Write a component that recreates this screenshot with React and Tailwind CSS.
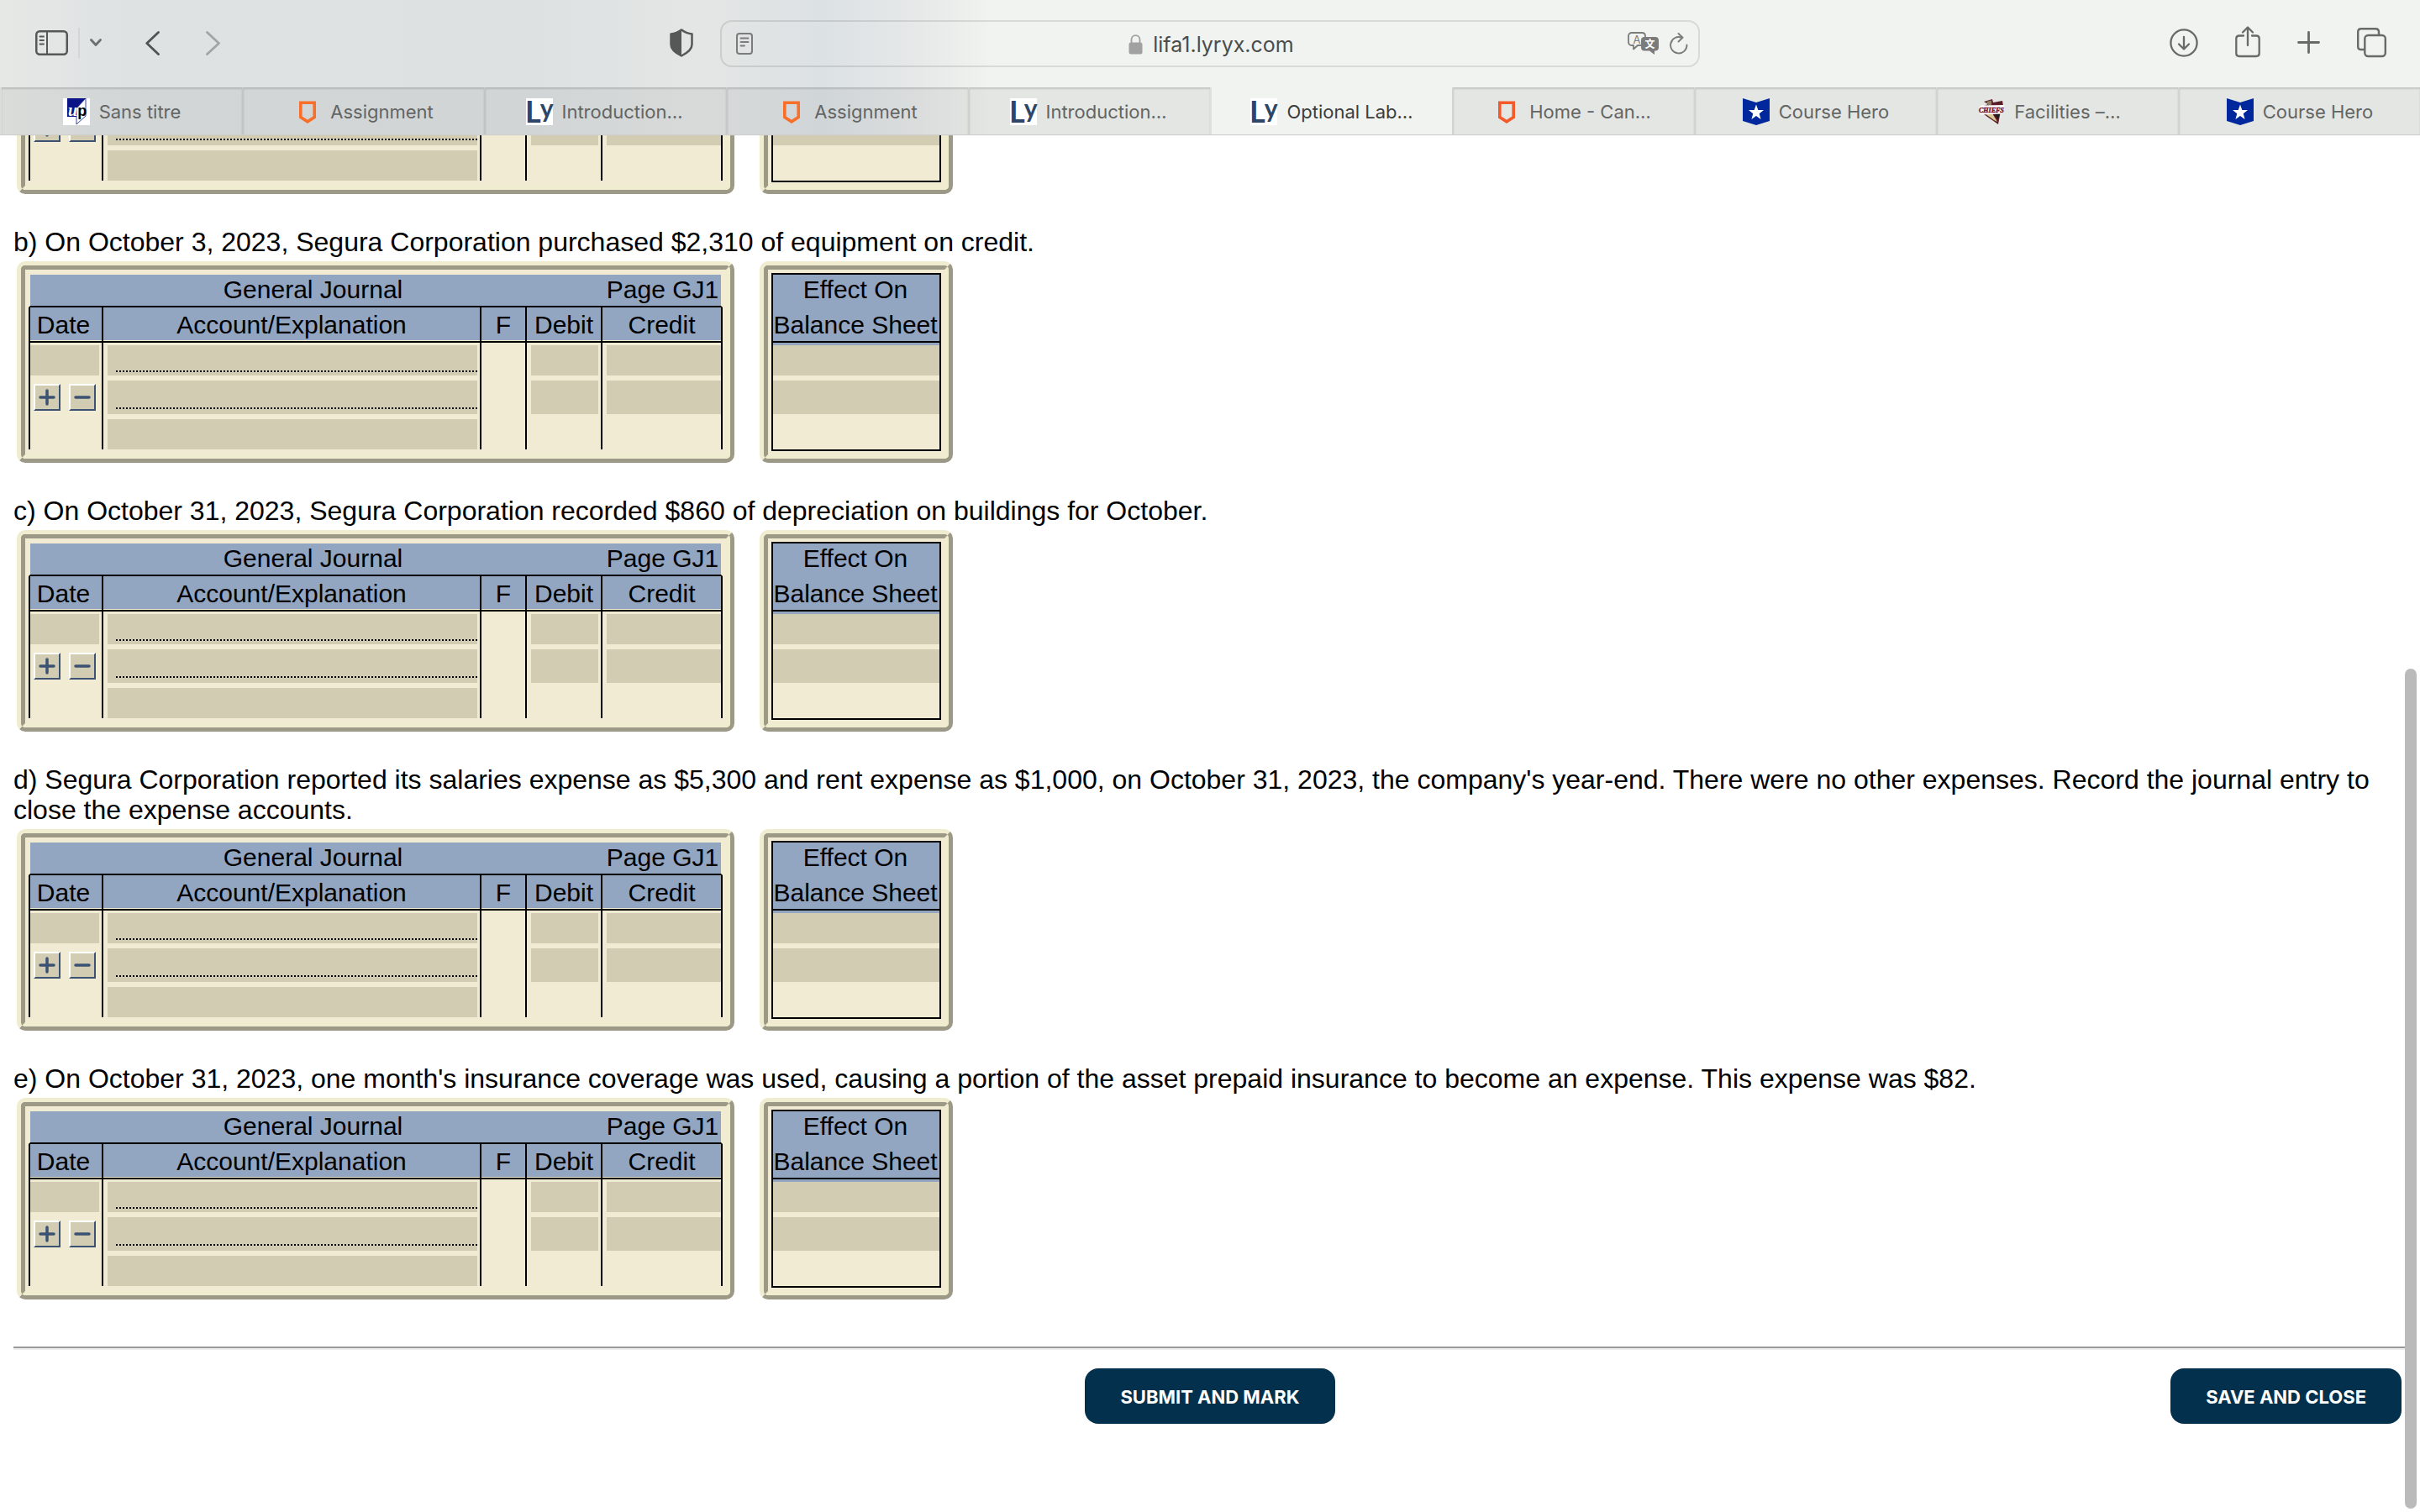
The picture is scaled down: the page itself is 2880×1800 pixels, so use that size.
import React from 'react';

/* ---------- Favicons ---------- */

function UpIcon() {
  return (
    <svg width="32" height="32" viewBox="0 0 32 32" className="overflow-visible" aria-hidden="true">
      <rect width="32" height="32" fill="#fff" />
      <path d="M5 0H27L16 12V22H5Z" fill="#0a1487" />
      <path d="M27 0V21L16 31V12Z" fill="#fff" stroke="#0a1487" strokeWidth="0.8" />
      <text x="6" y="21" fontWeight="700" fill="#fff">
        <tspan fontFamily="Liberation Serif, serif" fontStyle="italic" fontSize="20">u</tspan>
        <tspan fontFamily="Liberation Sans, sans-serif" fontSize="18" fill="#000">p</tspan>
      </text>
    </svg>
  );
}

function ShieldIcon({ color = '#f76f28' }) {
  return (
    <svg width="32" height="32" viewBox="0 0 32 32" aria-hidden="true">
      <path d="M7.8 5.2H24.2V22.5L16 27.8L7.8 22.5Z" fill="none" stroke={color} strokeWidth="3.6" />
    </svg>
  );
}

function LyIcon() {
  return (
    <svg width="32" height="32" viewBox="0 0 32 32" className="overflow-visible" aria-hidden="true">
      <rect width="32" height="32" fill="#fff" />
      <text x="-1" y="29" fontFamily="Lato, sans-serif" fontWeight="700" fontSize="36" fill="#2d4668">
        L<tspan fontSize="30" dx="-1" dy="-6">y</tspan>
      </text>
    </svg>
  );
}

function HeroIcon() {
  return (
    <svg width="32" height="32" viewBox="0 0 32 32" aria-hidden="true">
      <path d="M0 0L16 5L32 0V27L16 32L0 27Z" fill="#00279b" />
      <path d="M16 7.5L18.3 14H25L19.7 18.2L21.6 25L16 21L10.4 25L12.3 18.2L7 14H13.7Z" fill="#fff" />
    </svg>
  );
}

function ChiefsIcon() {
  return (
    <svg width="32" height="32" viewBox="0 0 32 32" className="overflow-visible" aria-hidden="true">
      <path d="M7 4L17 1L18 5L29 3L30 9L26 20L24 31L4 17L5 10L12 7Z" fill="#5c1d2a" />
      <path d="M10 4L16 2.5L16 8L13 9Z" fill="#8d8464" />
      <path d="M8 18L17 18L23 28L19 26Z" fill="#d8cc93" />
      <path d="M19 19L26 19L24 25Z" fill="#211a1c" />
      <path d="M1 11L4 8.5L31 8L29 18.5L3 19.5Z" fill="#fff" />
      <text x="1" y="17" fontFamily="Liberation Serif, serif" fontStyle="italic" fontWeight="700" fontSize="8" stroke="#7b1830" strokeWidth="0.5" fill="#7b1830">CHIEFS</text>
    </svg>
  );
}

/* ---------- Toolbar icons ---------- */

function SidebarIcon() {
  return (
    <svg width="39" height="30" viewBox="0 0 39 30" fill="none" stroke="#555857" strokeLinecap="round" aria-hidden="true">
      <rect x="1.25" y="1.25" width="36.5" height="27.5" rx="4" strokeWidth="2.5" />
      <path d="M14 1V29" strokeWidth="2" />
      <path d="M5.5 7.5H10M5.5 12H10M5.5 16.5H10" strokeWidth="1.8" />
    </svg>
  );
}

function PrivacyIcon() {
  return (
    <svg width="28" height="34" viewBox="0 0 28 34" fill="none" aria-hidden="true">
      <path d="M14 1.5C18 4.5 22 6 26.5 6.5V19C26.5 25 20 29.5 14 32.5C8 29.5 1.5 25 1.5 19V6.5C6 6 10 4.5 14 1.5Z" stroke="#555857" strokeWidth="2.5" strokeLinejoin="round" />
      <path d="M14 1.5V32.5C8 29.5 1.5 25 1.5 19V6.5C6 6 10 4.5 14 1.5Z" fill="#555857" />
    </svg>
  );
}

function ReaderIcon() {
  return (
    <svg width="20" height="26" viewBox="0 0 20 26" fill="none" stroke="#7a7d7b" strokeLinecap="round" aria-hidden="true">
      <rect x="1" y="1" width="18" height="24" rx="3" strokeWidth="2" />
      <path d="M5.5 6.5H14.5M5.5 11H14.5M5.5 15.5H10" strokeWidth="1.8" />
    </svg>
  );
}

function LockIcon() {
  return (
    <svg width="17" height="24" viewBox="0 0 17 24" fill="none" aria-hidden="true">
      <path d="M3.5 11V6.5C3.5 3.5 5.5 1.2 8.5 1.2S13.5 3.5 13.5 6.5V11" stroke="#a0a1a0" strokeWidth="1.8" />
      <rect x="0.5" y="9.5" width="16" height="14" rx="2.5" fill="#a0a1a0" />
    </svg>
  );
}

function TranslateIcon() {
  return (
    <svg width="38" height="28" viewBox="0 0 38 28" className="overflow-visible" aria-hidden="true">
      <path d="M16 16H12L7 20.5V16H5C2.5 16 1 14.5 1 12V5C1 2.5 2.5 1 5 1H17C19.5 1 21 2.5 21 5V7" fill="none" stroke="#7a7b7a" strokeWidth="1.8" strokeLinejoin="round" />
      <text x="11" y="13.5" textAnchor="middle" fontFamily="Inter, sans-serif" fontSize="13" fill="#7a7b7a">A</text>
      <path d="M20 6H33C35.5 6 37 7.5 37 10V18.5C37 21 35.5 22.5 33 22.5H32V27L26 22.5H20C17.5 22.5 16 21 16 18.5V10C16 7.5 17.5 6 20 6Z" fill="#7a7b7a" />
      <text x="26.5" y="19" textAnchor="middle" fontFamily="Noto Sans CJK SC, sans-serif" fontWeight="700" fontSize="12" fill="#fff">文</text>
    </svg>
  );
}

function ReloadIcon() {
  return (
    <svg width="22" height="26" viewBox="0 0 22 26" fill="none" stroke="#7a7b7a" strokeWidth="1.9" strokeLinecap="round" strokeLinejoin="round" aria-hidden="true">
      <path d="M20.5 14.5A9.7 9.7 0 1 1 14 5.6" />
      <path d="M10.5 1L15.5 5.8L10.5 10.5" />
    </svg>
  );
}

function DownloadIcon() {
  return (
    <svg width="34" height="38" viewBox="0 0 34 38" fill="none" stroke="#676a67" strokeWidth="2.3" strokeLinecap="round" strokeLinejoin="round" aria-hidden="true">
      <circle cx="17" cy="19" r="15.6" />
      <path d="M17 12V26M11 20.5L17 26.5L23 20.5" />
    </svg>
  );
}

function ShareIcon() {
  return (
    <svg width="30" height="38" viewBox="0 0 30 38" fill="none" stroke="#676a67" strokeWidth="2.3" strokeLinecap="round" strokeLinejoin="round" className="overflow-visible" aria-hidden="true">
      <path d="M10 10.5H5C2.8 10.5 1.3 12 1.3 14V31.5C1.3 33.8 2.8 35 5 35H25C27.2 35 28.7 33.8 28.7 31.5V14C28.7 12 27.2 10.5 25 10.5H20" />
      <path d="M15 22V1M9 6.5L15 0.5L21 6.5" />
    </svg>
  );
}

function PlusIcon() {
  return (
    <svg width="27" height="38" viewBox="0 0 27 38" fill="none" stroke="#676a67" strokeWidth="2.8" strokeLinecap="round" aria-hidden="true">
      <path d="M13.5 6.5V30.5M1.5 18.5H25.5" />
    </svg>
  );
}

function TabsIcon() {
  return (
    <svg width="35" height="38" viewBox="0 0 35 38" fill="none" stroke="#676a67" strokeWidth="2.4" strokeLinejoin="round" aria-hidden="true">
      <rect x="9.3" y="10" width="24.5" height="25" rx="4" />
      <path d="M9 27H5C2.5 27 1.2 25.5 1.2 23.5V6C1.2 3.8 2.5 2.3 5 2.3H22C24.5 2.3 26 3.5 26 6V10" />
    </svg>
  );
}

/* ---------- Browser chrome ---------- */

const tabs = [
  { title: 'Sans titre', icon: <UpIcon /> },
  { title: 'Assignment', icon: <ShieldIcon /> },
  { title: 'Introduction…', icon: <LyIcon />, pad: 'pr-1' },
  { title: 'Assignment', icon: <ShieldIcon /> },
  { title: 'Introduction…', icon: <LyIcon />, pad: 'pr-1' },
  { title: 'Optional Lab…', icon: <LyIcon />, active: true },
  { title: 'Home - Can…', icon: <ShieldIcon color="#f4592a" />, pad: 'pr-1' },
  { title: 'Course Hero', icon: <HeroIcon /> },
  { title: 'Facilities –…', icon: <ChiefsIcon />, pad: 'pr-5' },
  { title: 'Course Hero', icon: <HeroIcon /> },
];

function Toolbar() {
  return (
    <div className="grid h-[104px] grid-cols-[1fr_minmax(0,1166px)_1fr] items-center">
      <div className="flex items-center pb-0.5 pl-[42px] pr-8">
        <button aria-label="Show sidebar"><SidebarIcon /></button>
        <div className="ml-3 h-9 w-0.5 bg-[#d2d6d6]" />
        <button aria-label="Tab groups" className="ml-3">
          <svg width="14" height="10" viewBox="0 0 14 10" fill="none" stroke="#6c7070" strokeWidth="2.8" strokeLinecap="round" strokeLinejoin="round">
            <path d="M1.5 1.5L7 7.5L12.5 1.5" />
          </svg>
        </button>
        <button aria-label="Back" className="ml-[52px]">
          <svg width="18" height="29" viewBox="0 0 18 29" fill="none" stroke="#505353" strokeWidth="2.8" strokeLinecap="round" strokeLinejoin="round">
            <path d="M15.5 1.5L1.8 14.5L15.5 27.5" />
          </svg>
        </button>
        <button aria-label="Forward" className="ml-[54px]">
          <svg width="18" height="29" viewBox="0 0 18 29" fill="none" stroke="#a2a5a5" strokeWidth="2.8" strokeLinecap="round" strokeLinejoin="round">
            <path d="M1.5 1.5L15.5 14.5L1.5 27.5" />
          </svg>
        </button>
        <button aria-label="Privacy report" className="ml-auto"><PrivacyIcon /></button>
      </div>

      <div className="flex h-14 items-center rounded-[14px] border-2 border-black/10 pl-[17px] pr-3">
        <button aria-label="Reader"><ReaderIcon /></button>
        <div className="flex flex-1 items-center justify-center gap-3 pl-[50px] pt-0.5">
          <LockIcon />
          <span className="text-[25px] leading-8 text-[#4b4c4b]">lifa1.lyryx.com</span>
        </div>
        <button aria-label="Translate"><TranslateIcon /></button>
        <button aria-label="Reload" className="ml-3"><ReloadIcon /></button>
      </div>

      <div className="flex items-center justify-end gap-11 pb-0.5 pr-10">
        <button aria-label="Downloads"><DownloadIcon /></button>
        <button aria-label="Share"><ShareIcon /></button>
        <button aria-label="New tab"><PlusIcon /></button>
        <button aria-label="Tab overview"><TabsIcon /></button>
      </div>
    </div>
  );
}

function TabBar() {
  return (
    <nav className="grid h-14 grid-cols-10">
      {tabs.map((tab, i) => (
        <a
          key={i}
          href="#"
          className={`flex items-center justify-center gap-[11px] whitespace-nowrap border-l-2 pt-0.5 text-[22px] leading-7 ${
            i === 0 ? 'border-transparent' : 'border-black/8'
          } ${
            tab.active
              ? 'text-[#3c3d3c]'
              : 'bg-black/5 text-[#636563] shadow-[inset_0_2px_2px_rgba(0,0,0,0.14)]'
          } ${tab.pad || ''}`}
        >
          {tab.icon}
          {tab.title}
        </a>
      ))}
    </nav>
  );
}

/* ---------- Journal ---------- */

function Panel({ children }) {
  return (
    <div className="rounded-[10px] border-[5px] border-b-[#9d9987] border-l-[#f0ecd0] border-r-[#9d9987] border-t-[#f0ecd0] bg-[#f1ebd3]">
      <div className="h-full rounded-[5px] border-[5px] border-b-[#f0ecd0] border-l-[#9d9987] border-r-[#f0ecd0] border-t-[#9d9987] p-1">
        {children}
      </div>
    </div>
  );
}

function Field({ label, tall }) {
  return (
    <input
      type="text"
      aria-label={label}
      className={`block w-full bg-[#d2ccb3] px-1 outline-none ${tall ? 'h-10' : 'h-9'}`}
    />
  );
}

// Account name field with the dotted rule it is written on
function RuledField({ label, tall }) {
  return (
    <div className={`bg-[#d2ccb3] pl-2.5 ${tall ? 'h-10' : 'h-9'}`}>
      <input
        type="text"
        aria-label={label}
        className={`block w-full bg-transparent outline-none ${tall ? 'h-8' : 'h-[30px]'}`}
      />
      <div className="h-0.5 bg-[repeating-linear-gradient(90deg,#000_0_2px,transparent_2px_4px)]" />
    </div>
  );
}

function RowButton({ label, children }) {
  return (
    <button
      aria-label={label}
      className="flex size-8 items-center justify-center border-2 border-b-[#3b5272] border-l-white border-r-[#3b5272] border-t-white bg-[#d2ccb3]"
    >
      <svg width="20" height="20" viewBox="0 0 20 20" fill="none" stroke="#3b5272" strokeWidth="3.5" strokeLinecap="round">
        {children}
      </svg>
    </button>
  );
}

function JournalTable() {
  const head = 'h-[42px] border-b-2 border-l-2 border-black bg-[#92a5c1] pt-0.5 pb-0 pl-0 font-normal shadow-[inset_0_-1px_#f1ebd3]';
  return (
    <table className="w-[826px] table-fixed border-separate border-spacing-0 text-[30px] leading-[34px]">
      <colgroup>
        <col className="w-[87px]" />
        <col className="w-[450px]" />
        <col className="w-[54px]" />
        <col className="w-[90px]" />
        <col className="w-[145px]" />
      </colgroup>
      <thead>
        <tr>
          <th colSpan={4} className="h-[41px] border-b-2 border-l-2 border-t-2 border-b-black border-l-[#f1ebd3] border-t-[#f1ebd3] bg-[#92a5c1] pb-0.5 pl-0 pr-1.5 pt-0 font-normal">
            General Journal
          </th>
          <th className="h-[41px] border-b-2 border-r-2 border-t-2 border-b-black border-r-[#f1ebd3] border-t-[#f1ebd3] bg-[#92a5c1] pb-0.5 pl-1 pr-0 pt-0 font-normal">
            Page GJ1
          </th>
        </tr>
        <tr>
          <th className={`${head} pr-1.5`}>Date</th>
          <th className={`${head} pr-0`}>Account/Explanation</th>
          <th className={`${head} pr-0`}>F</th>
          <th className={`${head} pr-0`}>Debit</th>
          <th className={`${head} border-r-2 pr-0`}>Credit</th>
        </tr>
      </thead>
      <tbody>
        <tr>
          <td className="border-l-2 border-black py-[3px] pr-[3px]"><Field label="Date" /></td>
          <td className="border-l-2 border-black py-[3px] pl-[5px] pr-[3px]"><RuledField label="Account 1" /></td>
          <td className="border-l-2 border-black" />
          <td className="border-l-2 border-black py-[3px] pl-[5px] pr-[3px]"><Field label="Debit 1" /></td>
          <td className="border-l-2 border-r-2 border-black py-[3px] pl-[5px]"><Field label="Credit 1" /></td>
        </tr>
        <tr>
          <td className="border-l-2 border-black p-0 pl-1">
            <div className="flex gap-2.5">
              <RowButton label="Add row"><path d="M10 2V18M2 10H18" /></RowButton>
              <RowButton label="Remove row"><path d="M2 10H18" /></RowButton>
            </div>
          </td>
          <td className="border-l-2 border-black py-[3px] pl-[5px] pr-[3px]"><RuledField label="Account 2" tall /></td>
          <td className="border-l-2 border-black" />
          <td className="border-l-2 border-black py-[3px] pl-[5px] pr-[3px]"><Field label="Debit 2" tall /></td>
          <td className="border-l-2 border-r-2 border-black py-[3px] pl-[5px]"><Field label="Credit 2" tall /></td>
        </tr>
        <tr>
          <td className="border-l-2 border-black" />
          <td className="border-l-2 border-black pl-[5px] pr-[3px] pt-[3px]"><Field label="Explanation" /></td>
          <td className="border-l-2 border-black" />
          <td className="border-l-2 border-black" />
          <td className="border-l-2 border-r-2 border-black" />
        </tr>
      </tbody>
    </table>
  );
}

function EffectTable() {
  return (
    <table className="w-[202px] table-fixed border-separate border-spacing-0 border-2 border-black text-[30px] leading-[34px]">
      <thead>
        <tr>
          <th className="h-[37px] bg-[#92a5c1] pb-0.5 pl-0 pr-0.5 pt-0 font-normal">Effect On</th>
        </tr>
        <tr>
          <th className="h-11 whitespace-nowrap border-b-2 border-black bg-[#92a5c1] pb-0 pl-0 pr-0.5 pt-1 font-normal">Balance Sheet</th>
        </tr>
      </thead>
      <tbody>
        <tr>
          <td className="border-t-[3px] border-[#92a5c1] p-0 pb-[3px]"><Field label="Effect 1" /></td>
        </tr>
        <tr>
          <td className="px-0 py-[3px]"><Field label="Effect 2" tall /></td>
        </tr>
        <tr>
          <td className="h-[39px] p-0" />
        </tr>
      </tbody>
    </table>
  );
}

function Question({ text }) {
  return (
    <section className="pt-[39px]">
      {text && <p className="mb-[5px] px-4 text-[32px] leading-9">{text}</p>}
      <div className="flex gap-[30px] pl-5">
        <Panel><JournalTable /></Panel>
        <Panel><EffectTable /></Panel>
      </div>
    </section>
  );
}

const questions = [
  '',
  'b) On October 3, 2023, Segura Corporation purchased $2,310 of equipment on credit.',
  'c) On October 31, 2023, Segura Corporation recorded $860 of depreciation on buildings for October.',
  "d) Segura Corporation reported its salaries expense as $5,300 and rent expense as $1,000, on October 31, 2023, the company's year-end. There were no other expenses. Record the journal entry to close the expense accounts.",
  "e) On October 31, 2023, one month's insurance coverage was used, causing a portion of the asset prepaid insurance to become an expense. This expense was $82.",
];

function ActionButton({ className = '', children }) {
  return (
    <button className={`h-[66px] rounded-2xl bg-[#03314d] px-[42px] pt-0.5 font-[Inter,sans-serif] text-[22px] font-bold text-white ${className}`}>
      {children}
    </button>
  );
}

export default function App() {
  return (
    <div className="flex h-screen flex-col overflow-hidden bg-white">
      <header className="relative z-10 bg-[linear-gradient(90deg,#e6e8e5_0%,#dee2e3_5%,#dde1e2_22%,#e3e6e4_29%,#dce1e4_34%,#e6e9e8_38%,#f1f3f0_41%)] font-[Inter,sans-serif] shadow-[0_1px_1px_#cfd0cd]">
        <Toolbar />
        <TabBar />
      </header>

      {/* The page is scrolled to its end, so content hangs from the bottom */}
      <main className="relative flex min-h-0 flex-1 flex-col justify-end overflow-hidden font-['Liberation_Sans',Arial,sans-serif] text-black">
        {questions.map((text, i) => (
          <Question key={i} text={text} />
        ))}

        <hr className="ml-4 mr-[17px] mt-14 h-1 border-b-2 border-t-2 border-b-[#eeeeee] border-t-[#9a9a9a]" />

        <div className="grid grid-cols-[1fr_auto_1fr] px-[22px] pb-[105px] pt-[22px]">
          <ActionButton className="col-start-2">SUBMIT AND MARK</ActionButton>
          <ActionButton className="justify-self-end">SAVE AND CLOSE</ActionButton>
        </div>

        {/* Overlay scrollbar thumb */}
        <div className="absolute bottom-1 right-1 h-[61%] w-3.5 rounded-full bg-[#bababa]" />
      </main>
    </div>
  );
}
